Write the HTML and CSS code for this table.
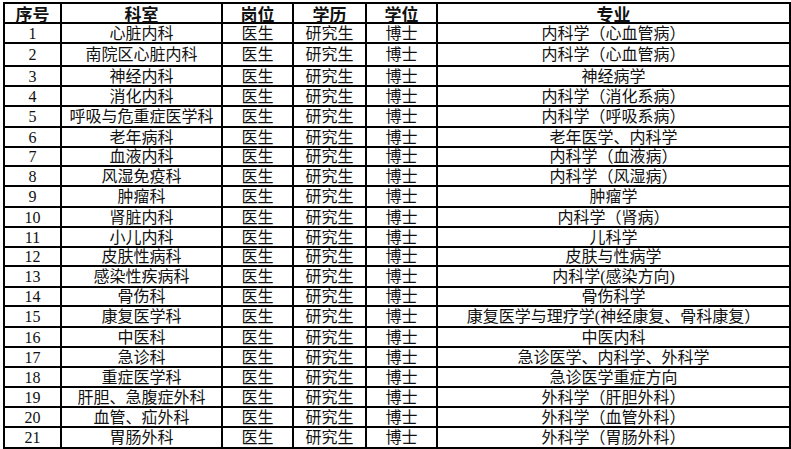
FILE: index.html
```html
<!DOCTYPE html>
<html lang="zh">
<head>
<meta charset="utf-8">
<link rel="stylesheet" href="styles.css">
</head>
<body>
<table class="grid">
  <colgroup>
    <col class="c-no"><col class="c-dept"><col class="c-post"><col class="c-edu"><col class="c-deg"><col class="c-major">
  </colgroup>
  <thead>
    <tr class="h20"><th>序号</th><th>科室</th><th>岗位</th><th>学历</th><th>学位</th><th>专业</th></tr>
  </thead>
  <tbody>
    <tr class="h20"><td class="no">1</td><td>心脏内科</td><td>医生</td><td>研究生</td><td>博士</td><td>内科学（心血管病）</td></tr>
    <tr class="h23"><td class="no">2</td><td>南院区心脏内科</td><td>医生</td><td>研究生</td><td>博士</td><td>内科学（心血管病）</td></tr>
    <tr class="h20"><td class="no">3</td><td>神经内科</td><td>医生</td><td>研究生</td><td>博士</td><td>神经病学</td></tr>
    <tr class="h20"><td class="no">4</td><td>消化内科</td><td>医生</td><td>研究生</td><td>博士</td><td>内科学（消化系病）</td></tr>
    <tr class="h21"><td class="no">5</td><td>呼吸与危重症医学科</td><td>医生</td><td>研究生</td><td>博士</td><td>内科学（呼吸系病）</td></tr>
    <tr class="h20"><td class="no">6</td><td>老年病科</td><td>医生</td><td>研究生</td><td>博士</td><td>老年医学、内科学</td></tr>
    <tr class="h19"><td class="no">7</td><td>血液内科</td><td>医生</td><td>研究生</td><td>博士</td><td>内科学（血液病）</td></tr>
    <tr class="h20"><td class="no">8</td><td>风湿免疫科</td><td>医生</td><td>研究生</td><td>博士</td><td>内科学（风湿病）</td></tr>
    <tr class="h21"><td class="no">9</td><td>肿瘤科</td><td>医生</td><td>研究生</td><td>博士</td><td>肿瘤学</td></tr>
    <tr class="h20"><td class="no">10</td><td>肾脏内科</td><td>医生</td><td>研究生</td><td>博士</td><td>内科学（肾病）</td></tr>
    <tr class="h20"><td class="no">11</td><td>小儿内科</td><td>医生</td><td>研究生</td><td>博士</td><td>儿科学</td></tr>
    <tr class="h19"><td class="no">12</td><td>皮肤性病科</td><td>医生</td><td>研究生</td><td>博士</td><td>皮肤与性病学</td></tr>
    <tr class="h21"><td class="no">13</td><td>感染性疾病科</td><td>医生</td><td>研究生</td><td>博士</td><td>内科学(感染方向)</td></tr>
    <tr class="h19"><td class="no">14</td><td>骨伤科</td><td>医生</td><td>研究生</td><td>博士</td><td>骨伤科学</td></tr>
    <tr class="h21"><td class="no">15</td><td>康复医学科</td><td>医生</td><td>研究生</td><td>博士</td><td>康复医学与理疗学(神经康复、骨科康复）</td></tr>
    <tr class="h20"><td class="no">16</td><td>中医科</td><td>医生</td><td>研究生</td><td>博士</td><td>中医内科</td></tr>
    <tr class="h20"><td class="no">17</td><td>急诊科</td><td>医生</td><td>研究生</td><td>博士</td><td>急诊医学、内科学、外科学</td></tr>
    <tr class="h20"><td class="no">18</td><td>重症医学科</td><td>医生</td><td>研究生</td><td>博士</td><td>急诊医学重症方向</td></tr>
    <tr class="h20"><td class="no">19</td><td>肝胆、急腹症外科</td><td>医生</td><td>研究生</td><td>博士</td><td>外科学（肝胆外科）</td></tr>
    <tr class="h20"><td class="no">20</td><td>血管、疝外科</td><td>医生</td><td>研究生</td><td>博士</td><td>外科学（血管外科）</td></tr>
    <tr class="h21"><td class="no">21</td><td>胃肠外科</td><td>医生</td><td>研究生</td><td>博士</td><td>外科学（胃肠外科）</td></tr>
  </tbody>
</table>
</body>
</html>
```
FILE: styles.css
```css
html, body {
  margin: 0;
  padding: 0;
  background: #fff;
}
body {
  padding: 2px 0 0 3px;
}
.grid {
  border-collapse: collapse;
  table-layout: fixed;
  width: 786px;
  font-family: "Liberation Serif", "Noto Sans CJK SC", serif;
  font-size: 16px;
  color: #111;
}
.c-no { width: 57px; }
.c-dept { width: 161px; }
.c-post { width: 71px; }
.c-edu { width: 73px; }
.c-deg { width: 71px; }
.c-major { width: 353px; }
.grid th, .grid td {
  border: 2px solid #000;
  padding: 0;
  text-align: center;
  vertical-align: middle;
  line-height: 17px;
  white-space: nowrap;
}
.grid th {
  font-family: "Noto Sans CJK SC", sans-serif;
  font-weight: bold;
  font-size: 17px;
  line-height: 17px;
}
.grid td.no {
  font-size: 16px;
}
.h19 { height: 19px; }
.h20 { height: 20px; }
.h21 { height: 21px; }
.h23 { height: 23px; }
```
